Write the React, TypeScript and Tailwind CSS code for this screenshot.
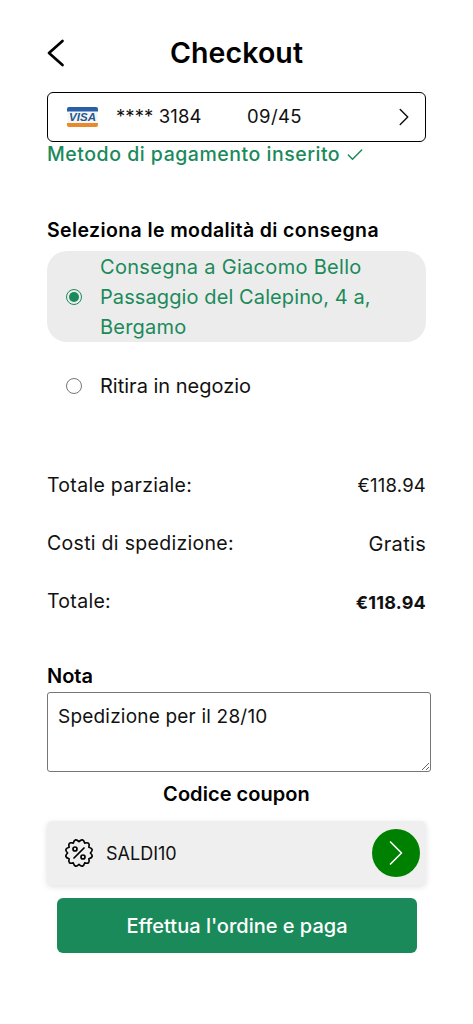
import { Check, ChevronRight } from "lucide-react"

function VisaLogo() {
  return (
    <svg width="31" height="20" viewBox="0 0 31 20">
      <rect x="0.5" y="0.5" width="30" height="19" rx="1.5" fill="#f4f6f8" />
      <path d="M0 2a2 2 0 0 1 2-2h27a2 2 0 0 1 2 2v2.5H0z" fill="#2a5fa8" />
      <path d="M0 16h31v2a2 2 0 0 1-2 2H2a2 2 0 0 1-2-2z" fill="#e8892c" />
      <text
        x="15.5"
        y="14.2"
        textAnchor="middle"
        fontSize="11.5"
        fontWeight="700"
        fontStyle="italic"
        fill="#27578f"
        fontFamily="'Liberation Sans', sans-serif"
      >
        VISA
      </text>
    </svg>
  )
}

// wavy badge outline, 12 bumps
function badgePath() {
  const n = 12
  const c = 15
  let d = ""
  for (let i = 0; i < n; i++) {
    const a = (i / n) * Math.PI * 2 - Math.PI / 2
    const mid = a + Math.PI / n
    const next = a + (2 * Math.PI) / n
    const p = (r: number, t: number) => `${(c + r * Math.cos(t)).toFixed(2)} ${(c + r * Math.sin(t)).toFixed(2)}`
    if (i === 0) d += `M${p(11.4, a)}`
    d += `Q${p(16.2, mid)} ${p(11.4, next)}`
  }
  return d + "Z"
}

function CouponIcon() {
  return (
    <svg width="30" height="30" viewBox="0 0 30 30" fill="none" stroke="#000" strokeWidth="1.7" strokeLinecap="round" strokeLinejoin="round">
      <path d={badgePath()} />
      <path d="M10 20l10-10" />
      <circle cx="11" cy="11" r="2" />
      <circle cx="19" cy="19" r="2" />
    </svg>
  )
}

function SummaryRow({ label, value, valueClass }: { label: string; value: string; valueClass: string }) {
  return (
    <div className="flex h-[28px] items-center justify-between text-[#111]">
      <span className="text-[19.5px] tracking-[0.3px]">{label}</span>
      <span className={valueClass}>{value}</span>
    </div>
  )
}

export default function App() {
  return (
    <div className="min-h-[1024px] w-[473px] bg-white font-['Inter',sans-serif] text-black">
      <div className="px-[47px] pt-[34px]">
        <header className="relative flex h-[38px] items-center justify-center">
          <svg className="absolute left-0 top-[5px]" width="18" height="28" viewBox="0 0 18 28" fill="none" stroke="#000" strokeWidth="2.7" strokeLinecap="round" strokeLinejoin="round">
            <path d="M15.5 2L2 14l13.5 12" />
          </svg>
          <h1 className="text-[28.5px] font-semibold tracking-[0.1px]">Checkout</h1>
        </header>

        <div className="mt-[20px] flex h-[50px] items-center rounded-[6px] border border-black pl-[19px] pr-[6px] text-[18.5px] tracking-[0.1px] text-[#111]">
          <VisaLogo />
          <span className="ml-[18px] w-[131px]">**** 3184</span>
          <span className="tracking-[0.4px]">09/45</span>
          <ChevronRight className="ml-auto" size={30} strokeWidth={1.2} />
        </div>

        <div className="flex h-[26px] items-center gap-[5px] text-[19.5px] font-medium tracking-[0.52px] text-[#1b8a5a]">
          Metodo di pagamento inserito
          <Check size={20} strokeWidth={1.8} />
        </div>

        <h2 className="mt-[49px] flex h-[28px] items-center text-[19.5px] font-semibold tracking-[0.39px]">
          Seleziona le modalità di consegna
        </h2>

        <div className="mt-[6px] flex h-[91px] items-center rounded-[20px] bg-[#ececec] pl-[19px]">
          <span className="flex h-[16px] w-[16px] items-center justify-center rounded-full border border-[#1b8a5a]">
            <span className="h-[10px] w-[10px] rounded-full bg-[#1b8a5a]" />
          </span>
          <p className="ml-[18px] text-[20px] leading-[30px] tracking-[0.2px] text-[#1b8a5a]">
            <span className="tracking-[0.3px]">Consegna a Giacomo Bello</span>
            <br />
            <span className="tracking-[0.1px]">Passaggio del Calepino, 4 a,</span>
            <br />
            Bergamo
          </p>
        </div>

        <div className="mt-[29px] flex h-[30px] items-center pl-[19px] text-[20px] text-[#111]">
          <span className="h-[16px] w-[16px] rounded-full border border-[#767676] bg-white" />
          <span className="ml-[18px]">Ritira in negozio</span>
        </div>

        <div className="mt-[71px] flex flex-col gap-[30px]">
          <SummaryRow label="Totale parziale:" value="€118.94" valueClass="text-[18.5px] tracking-[0.2px]" />
          <SummaryRow label="Costi di spedizione:" value="Gratis" valueClass="text-[20px] tracking-[0.3px]" />
          <SummaryRow label="Totale:" value="€118.94" valueClass="text-[18px] font-bold tracking-[0.2px]" />
        </div>

        <h2 className="mt-[46px] flex h-[28px] items-center text-[20px] font-semibold">Nota</h2>

        <textarea
          readOnly
          defaultValue="Spedizione per il 28/10"
          className="mt-[2px] block h-[80px] w-[384px] rounded-[3px] border border-[#767676] px-[10px] py-[10px] text-[19px] leading-[28px] tracking-[0.2px] text-[#111] outline-none"
        />

        <h2 className="mt-[8px] text-center text-[20px] font-semibold leading-[28px] tracking-[0.05px]">Codice coupon</h2>

        <div className="mt-[13px] flex h-[64px] items-center rounded-[5px] bg-[#efefef] pl-[17px] pr-[6px] shadow-[0_2px_6px_rgba(0,0,0,0.12)]">
          <CouponIcon />
          <span className="ml-[12px] text-[18px] text-[#111]">SALDI10</span>
          <span className="ml-auto flex h-[48px] w-[48px] items-center justify-center rounded-full bg-[#008000] text-white">
            <ChevronRight size={44} strokeWidth={0.9} />
          </span>
        </div>

        <button className="mx-[10px] mt-[13px] flex h-[55px] w-[360px] items-center justify-center rounded-[6px] bg-[#1b8a5a] text-[20px] font-medium text-white">
          Effettua l'ordine e paga
        </button>
      </div>
    </div>
  )
}
